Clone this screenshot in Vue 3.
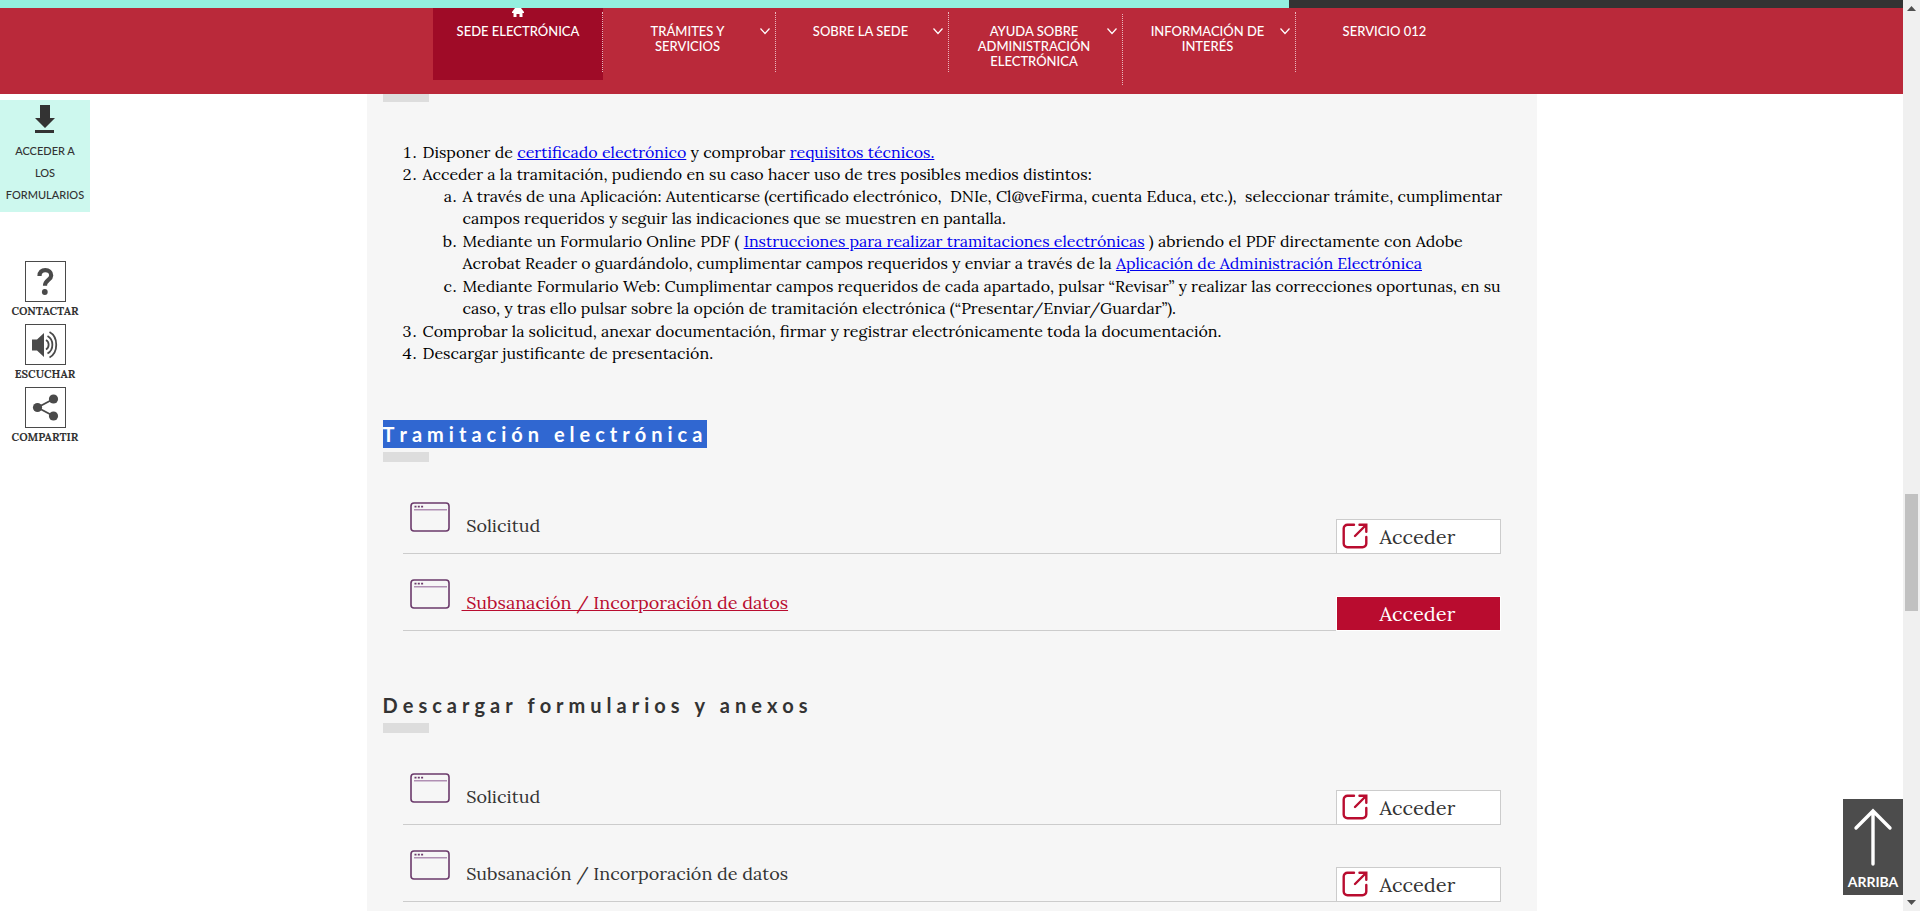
<script setup>
import { ref } from 'vue'

const progress = ref(67.75)

const menu = [
  { label: 'SEDE ELECTRÓNICA', home: true, active: true },
  { label: 'TRÁMITES Y SERVICIOS', sub: true },
  { label: 'SOBRE LA SEDE', sub: true },
  { label: 'AYUDA SOBRE ADMINISTRACIÓN ELECTRÓNICA', sub: true, tall: true },
  { label: 'INFORMACIÓN DE INTERÉS', sub: true },
  { label: 'SERVICIO 012' }
]

const sections = [
  {
    title: 'Tramitación electrónica',
    selected: true,
    rows: [
      { name: 'Solicitud' },
      { name: 'Subsanación / Incorporación de datos', hover: true }
    ]
  },
  {
    title: 'Descargar formularios y anexos',
    rows: [
      { name: 'Solicitud' },
      { name: 'Subsanación / Incorporación de datos' }
    ]
  }
]
</script>

<template>
  <div class="page">
    <div class="viewport">
      <header class="header">
        <div class="progress">
          <div class="progress-bar" :style="{ width: progress + '%' }"></div>
        </div>
        <nav class="menu">
          <a
            v-for="item in menu"
            :key="item.label"
            href="#"
            class="menu-item"
            :class="{ active: item.active, tall: item.tall }"
          >
            <svg v-if="item.home" class="home" viewBox="0 0 12 9" width="12" height="9">
              <path d="M3 0h6l3 4v1h-1.500v4H7.500V6h-3v3H1.500V5H0V4z" fill="#fff" />
            </svg>
            <span class="menu-label">{{ item.label }}</span>
            <svg v-if="item.sub" class="chevron" viewBox="0 0 12 8" width="12" height="8">
              <path d="M1.500 1.500 6 6.500l4.500-5" fill="none" stroke="#fff" stroke-width="1.200" />
            </svg>
          </a>
        </nav>
      </header>

      <aside class="side">
        <a href="#" class="side-forms">
          <svg viewBox="0 0 20 28" width="20" height="28">
            <path d="M5 0h10v13h5L10 23 0 13h5zM0 25h19v3H0z" fill="#333" />
          </svg>
          <span>ACCEDER A LOS FORMULARIOS</span>
        </a>
        <div class="side-tools">
          <a href="#" class="tool">
            <svg viewBox="0 0 41 41" width="41" height="41">
              <rect x=".5" y=".5" width="40" height="40" fill="#fff" stroke="#4a4a4a" />
              <path d="M14.500 15c0-4 2.300-5.800 5.800-5.800s5.900 2 5.900 5.200c0 4.600-6.200 4.600-6.200 10.300" fill="none" stroke="#4a4a4a" stroke-width="4.200" />
              <circle cx="19.800" cy="31" r="2.900" fill="#4a4a4a" />
            </svg>
            <span>CONTACTAR</span>
          </a>
          <a href="#" class="tool">
            <svg viewBox="0 0 41 41" width="41" height="41">
              <rect x=".5" y=".5" width="40" height="40" fill="#fff" stroke="#4a4a4a" />
              <path d="M7 15.500h5L19 9v24l-7-6.500H7z" fill="#4a4a4a" />
              <g fill="none" stroke="#4a4a4a" stroke-width="1.800">
                <path d="M21 16c3.500 2 3.500 7.500 0 9.500" />
                <path d="M22.500 12c6.500 3.500 6.500 14 0 17.500" />
                <path d="M24.500 8c9 5 9 20.500 0 25.500" />
              </g>
            </svg>
            <span>ESCUCHAR</span>
          </a>
          <a href="#" class="tool">
            <svg viewBox="0 0 41 41" width="41" height="41">
              <rect x=".5" y=".5" width="40" height="40" fill="#fff" stroke="#4a4a4a" />
              <path d="M28.500 12 12.500 20.500l16 8.500" fill="none" stroke="#4a4a4a" stroke-width="1.800" />
              <g fill="#4a4a4a">
                <circle cx="28.500" cy="12" r="4.600" />
                <circle cx="12.500" cy="20.500" r="4.600" />
                <circle cx="28.500" cy="29" r="4.600" />
              </g>
            </svg>
            <span>COMPARTIR</span>
          </a>
        </div>
      </aside>

      <main class="content">
        <div class="stub first"></div>

        <ol class="steps">
          <li>Disponer de <a href="#">certificado electrónico</a> y comprobar <a href="#">requisitos técnicos.</a></li>
          <li>
            Acceder a la tramitación, pudiendo en su caso hacer uso de tres posibles medios distintos:
            <ol class="substeps">
              <li>A través de una Aplicación: Autenticarse (certificado electrónico,&nbsp; DNIe, Cl@veFirma, cuenta Educa, etc.),&nbsp; seleccionar trámite, cumplimentar campos requeridos y seguir las indicaciones que se muestren en pantalla.</li>
              <li>Mediante un Formulario Online PDF ( <a href="#">Instrucciones para realizar tramitaciones electrónicas</a> ) abriendo el PDF directamente con Adobe Acrobat Reader o guardándolo, cumplimentar campos requeridos y enviar a través de la <a href="#">Aplicación de Administración Electrónica</a></li>
              <li>Mediante Formulario Web: Cumplimentar campos requeridos de cada apartado, pulsar “Revisar” y realizar las correcciones oportunas, en su caso, y tras ello pulsar sobre la opción de tramitación electrónica (“Presentar/Enviar/Guardar”).</li>
            </ol>
          </li>
          <li>Comprobar la solicitud, anexar documentación, firmar y registrar electrónicamente toda la documentación.</li>
          <li>Descargar justificante de presentación.</li>
        </ol>

        <section v-for="section in sections" :key="section.title" class="section">
          <h2><span :class="{ selected: section.selected }">{{ section.title }}</span></h2>
          <div class="stub"></div>
          <ul class="rows">
            <li v-for="row in section.rows" :key="row.name" class="row" :class="{ hover: row.hover }">
              <svg class="window-icon" viewBox="0 0 40 30" width="40" height="30">
                <rect x="1" y="1" width="38" height="28" rx="3" fill="none" stroke="#6b3a6b" stroke-width="1.600" />
                <path d="M4 7.800h33" stroke="#b08fb3" stroke-width="1.600" />
                <path d="M4.500 4.700h2m1.300 0h2m1.300 0h2" stroke="#6b3a6b" stroke-width="1.800" />
              </svg>
              <a href="#" class="row-name">&nbsp;{{ row.name }}</a>
              <a href="#" class="access">
                <svg viewBox="0 0 26 26" width="26" height="26">
                  <g v-if="!row.hover" fill="none" stroke="#b90c2f" stroke-width="2.400" stroke-linecap="round">
                    <path d="M12 1.700H5.500A3.800 3.800 0 0 0 1.700 5.500v15a3.800 3.800 0 0 0 3.800 3.800h15a3.800 3.800 0 0 0 3.800-3.800v-6.500" />
                    <path d="M17.500 1.700h6.800v7M24 2 13 13" />
                  </g>
                </svg>
                Acceder
              </a>
            </li>
          </ul>
        </section>
      </main>

      <a href="#" class="to-top">
        <svg viewBox="0 0 40 58" width="40" height="58">
          <path d="M20 56V3M3 20 20 3l17 17" fill="none" stroke="#fff" stroke-width="3.400" stroke-linecap="round" />
        </svg>
        ARRIBA
      </a>
    </div>

    <div class="scrollbar">
      <svg viewBox="0 0 17 17" width="17" height="17"><path d="M4 11h9L8.500 6z" fill="#505050" /></svg>
      <div class="track">
        <div class="thumb"></div>
      </div>
      <svg viewBox="0 0 17 17" width="17" height="17"><path d="M4 6h9l-4.500 5z" fill="#505050" /></svg>
    </div>
  </div>
</template>

<style>
body {
  margin: 0;
  overflow: hidden;
}
</style>

<style scoped>
.page {
  display: flex;
  height: 100vh;
  overflow: hidden;
  background: #fff;
  font-family: Lora, "Liberation Serif", serif;
}

.viewport {
  position: relative;
  flex: 1;
  overflow: hidden;
}

a {
  text-decoration: none;
}

/* cabecera */
.header {
  height: 94px;
  background: #ba293a;
}

.progress {
  height: 8px;
  background: #333;
}

.progress-bar {
  height: 100%;
  background: #94efdf;
}

.menu {
  display: flex;
  justify-content: center;
  align-items: flex-start;
  padding-right: 1px;
  font-family: Lato, sans-serif;
  font-size: 13px;
  font-weight: 500;
  line-height: 15px;
}

.menu-item {
  position: relative;
  box-sizing: border-box;
  width: 173px;
  height: 72px;
  padding: 16px 30px 0 26px;
  color: #fff;
  text-align: center;
}

.menu-item:last-child {
  padding: 16px 26px 0 30px;
}

.menu-item:not(:last-child)::after {
  content: '';
  position: absolute;
  top: 4px;
  right: 0;
  height: 60px;
  border-right: 1px dotted #e9b7bd;
}

.menu-item.tall {
  width: 174px;
}

.menu-item.tall::after {
  top: 6px;
  height: 71px;
}

.menu-item.active {
  width: 170px;
  padding: 16px 16px 0;
  background: #9f0b27;
}

.home {
  position: absolute;
  top: 0;
  left: 79px;
}

.chevron {
  position: absolute;
  top: 19px;
  right: 5px;
}

/* lateral */
.side {
  position: absolute;
  top: 100px;
  left: 0;
  width: 90px;
}

.side-forms {
  display: flex;
  flex-direction: column;
  align-items: center;
  height: 107px;
  padding-top: 5px;
  background: #cdf8ee;
  color: #333;
  font-family: Lato, sans-serif;
  font-size: 11px;
  font-weight: 500;
  line-height: 22px;
  text-align: center;
}

.side-forms span {
  padding: 7px 5px 0;
}

.side-tools {
  display: flex;
  flex-direction: column;
  gap: 5px;
  margin-top: 49px;
}

.tool {
  display: flex;
  flex-direction: column;
  align-items: center;
  gap: 1px;
  color: #333;
  font-size: 11px;
  font-weight: 700;
  line-height: 16px;
}

/* contenido */
.content {
  box-sizing: border-box;
  max-width: 1170px;
  margin: 0 auto;
  padding: 0 16px;
  background: #f6f6f6;
}

.stub {
  width: 46px;
  height: 10px;
  background: #ddd;
}

.stub.first {
  height: 8px;
}

.steps {
  margin: 39px 16px 56px 0;
  padding-left: 40px;
  font-size: 16px;
  line-height: 22px;
  color: #000;
}

.steps a {
  color: #00e;
  text-decoration: underline;
}

.substeps {
  padding-left: 40px;
  list-style: lower-alpha;
}

.substeps li {
  margin-bottom: 1px;
}

h2 {
  margin: 0 0 4px;
  font-family: Lato, sans-serif;
  font-size: 20px;
  font-weight: 700;
  font-kerning: none;
  line-height: 28px;
  letter-spacing: 5px;
  color: #333;
}

h2 span {
  display: inline-block;
}

.selected {
  background: #3067d1;
  color: #fff;
}

.section {
  padding-bottom: 60px;
}

.rows {
  margin: 15px 20px 0;
  padding: 0;
  list-style: none;
}

.row {
  display: flex;
  align-items: flex-end;
  height: 76px;
  border-bottom: 1px solid #ccc;
}

.window-icon {
  margin: 0 12px 21px 7px;
}

.row-name {
  flex: 1;
  margin-bottom: 15px;
  font-size: 18px;
  line-height: 24px;
  color: #333;
}

.access {
  display: flex;
  align-items: center;
  gap: 12px;
  box-sizing: border-box;
  width: 165px;
  height: 35px;
  margin-bottom: -1px;
  padding: 0 0 1px 5px;
  border: 1px solid #ccc;
  background: #fff;
  color: #333;
  font-size: 20px;
}

.row.hover .row-name {
  color: #b90c2f;
  text-decoration: underline;
}

.row.hover .access {
  border-color: #fff;
  background: #b90c2f;
  color: #fff;
}

/* volver arriba */
.to-top {
  position: absolute;
  right: 0;
  bottom: 16px;
  display: flex;
  flex-direction: column;
  align-items: center;
  gap: 8px;
  box-sizing: border-box;
  width: 60px;
  height: 96px;
  padding-top: 9px;
  background: #4c4c4c;
  color: #fff;
  font-family: Lato, sans-serif;
  font-size: 14px;
  font-weight: 700;
  line-height: 16px;
}

/* barra de desplazamiento */
.scrollbar {
  display: flex;
  flex-direction: column;
  width: 17px;
  background: #f0f0f0;
}

.track {
  flex: 1;
  display: flex;
  flex-direction: column;
  align-items: center;
}

.track::before {
  content: '';
  flex: 477;
}

.track::after {
  content: '';
  flex: 283;
}

.thumb {
  width: 13px;
  height: 117px;
  background: #c1c1c1;
}
</style>
